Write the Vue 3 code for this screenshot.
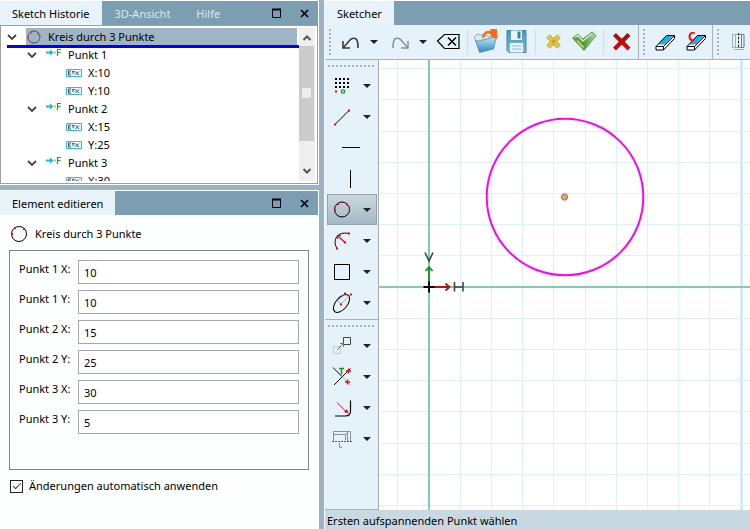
<script setup>
import { ref, computed, onMounted, onBeforeUnmount } from 'vue'

const historyTabs = ['Sketch Historie', '3D-Ansicht', 'Hilfe']
const activeTab = ref('Sketch Historie')

const tree = [
  { text: 'Kreis durch 3 Punkte', depth: 0, icon: 'treeCircle', selected: true },
  { text: 'Punkt 1', depth: 1, icon: 'treePoint' },
  { text: 'X:10', depth: 2, icon: 'treeExpr' },
  { text: 'Y:10', depth: 2, icon: 'treeExpr' },
  { text: 'Punkt 2', depth: 1, icon: 'treePoint' },
  { text: 'X:15', depth: 2, icon: 'treeExpr' },
  { text: 'Y:25', depth: 2, icon: 'treeExpr' },
  { text: 'Punkt 3', depth: 1, icon: 'treePoint' },
  { text: 'X:30', depth: 2, icon: 'treeExpr' }
]

const fields = ref([
  { id: 'p1x', label: 'Punkt 1 X:', value: '10' },
  { id: 'p1y', label: 'Punkt 1 Y:', value: '10' },
  { id: 'p2x', label: 'Punkt 2 X:', value: '15' },
  { id: 'p2y', label: 'Punkt 2 Y:', value: '25' },
  { id: 'p3x', label: 'Punkt 3 X:', value: '30' },
  { id: 'p3y', label: 'Punkt 3 Y:', value: '5' }
])
const autoApply = ref(true)

const barGroups = [
  [
    { icon: 'undo', label: 'Rückgängig', menu: true },
    { icon: 'redo', label: 'Wiederholen', menu: true },
    { icon: 'erase', label: 'Löschen' },
    { sep: true },
    { icon: 'open', label: 'Öffnen' },
    { icon: 'save', label: 'Speichern' },
    { sep: true },
    { icon: 'yellowX', label: 'Verwerfen' },
    { icon: 'check', label: 'Übernehmen' },
    { sep: true },
    { icon: 'redX', label: 'Abbrechen' }
  ],
  [
    { icon: 'rubber', label: 'Radieren' },
    { icon: 'rubberC', label: 'Bedingungen radieren' }
  ],
  [{ icon: 'sheet', label: 'Ansicht' }]
]

const toolGroups = [
  [
    { icon: 'raster', label: 'Raster', menu: true },
    { icon: 'line', label: 'Linie', menu: true },
    { icon: 'hline', label: 'Horizontale' },
    { icon: 'vline', label: 'Vertikale' },
    { icon: 'circle', label: 'Kreis', menu: true, active: true },
    { icon: 'arc', label: 'Bogen', menu: true },
    { icon: 'rect', label: 'Rechteck', menu: true },
    { icon: 'ellipse', label: 'Ellipse', menu: true }
  ],
  [
    { icon: 'move', label: 'Verschieben', menu: true },
    { icon: 'trim', label: 'Trimmen', menu: true },
    { icon: 'fillet', label: 'Verrunden', menu: true },
    { icon: 'measure', label: 'Bemaßung', menu: true }
  ]
]

const rasterDots = [6, 10, 14]
  .flatMap(y => [7, 11, 15, 19].map(x => `<rect x="${x}" y="${y}" width="2" height="2"/>`))
  .join('')

const rubberBody =
  '<path d="M5 18.500L15.500 7.500h8v3l-11 11.500H5z" fill="#fff"/>' +
  '<path d="M7 16.500L15.500 7.500h7l-8.500 9z" fill="#18b0ea"/>' +
  '<path d="M5 18.500h7.500v3.500H5zM12.500 18.500l11-11v3l-11 11.500M5 18.500L15.500 7.500h8" fill="none" stroke="#000"/>'

const icons = {
  undo: '<path d="M7 13v7h7M7.500 19.500L13.500 12.500C16 9.500 20 9.500 21.300 13C22 15 22 17 22 20" fill="none" stroke="#3a3a3a" stroke-width="1.600"/>',
  redo: '<path d="M23 13v7h-7M22.500 19.500L16.500 12.500C14 9.500 10 9.500 8.700 13C8 15 8 17 8 20" fill="none" stroke="#8a8f92" stroke-width="1.500"/>',
  erase: '<path d="M2.500 13L9.500 6.500h14.500v14h-14.500z" fill="none" stroke="#000" stroke-width="1.200"/><path d="M13 9.500l8 8M21 9.500l-8 8" stroke="#000" stroke-width="1.500"/>',
  open:
    '<path d="M2 9l3-3 4 1 3-1 8 4 2 9-13 4z" fill="#dfe9ee" stroke="#8fa9b5"/>' +
    '<path d="M6 13l18.500-4.500-3 12.500-14 3.500-4-12z" fill="url(#gFolder)" stroke="#4b8fb5" stroke-width=".8"/>' +
    '<path d="M9.500 10C11 4.500 14 2 18.500 2.800V1h6.500l.5 10-4.500-1.500-3-2 1-1C16 4.500 13 5.500 13 9z" fill="#fb6a14"/>',
  save:
    '<path d="M4 2.500h19v22H6l-2-2z" fill="url(#gDisk)" stroke="#3d86ac"/>' +
    '<path d="M8 2.500h11v9.500H8z" fill="#edf5f8"/><path d="M14.500 3.500h3v7h-3z" fill="#3c83a8"/>' +
    '<path d="M7 15h13v9.500H7z" fill="#e7f3f7"/><path d="M9 18h9M9 21h9" stroke="#8fc0d4"/>',
  yellowX:
    '<path d="M8 8l11 11M19 8L8 19" stroke="#c3a43d" stroke-width="5"/>' +
    '<path d="M8 8l11 11M19 8L8 19" stroke="#dfc83c" stroke-width="3.400"/>' +
    '<path d="M11.500 13.500h4M13.500 11.500v4" stroke="#d99b20" stroke-width="2"/>',
  check:
    '<path d="M1.500 10l5.300-4 5 5 9.400-7 4 3.500L13 22.500z" fill="url(#gCheck)" stroke="#6f9668"/>' +
    '<path d="M4 9.500l2.800-2 5 5.500 9-7" fill="none" stroke="#d9f0c4" stroke-width="1.500"/>' +
    '<path d="M6 12.500l6.500 7" stroke="#dac83a" stroke-width="2"/>',
  redX: '<path d="M6.500 6.500l14.500 14.500M21 6.500L6.500 21" stroke="url(#gRed)" stroke-width="4.200"/>',
  rubber: rubberBody,
  rubberC: rubberBody + '<text x="6" y="12.500" font-size="12" font-weight="bold" fill="#f00">C</text>',
  sheet:
    '<path d="M7.500 6.500h6v13h-6zM10.500 7v12" fill="none" stroke="#a5adb1"/>' +
    '<path d="M13.500 5v16" stroke="#222" stroke-dasharray="2 2"/>' +
    '<path d="M13.500 6.500h5.500v13h-5.500M16.500 7v12" fill="none" stroke="#737b80"/><path d="M9 21.500h10" stroke="#a5adb1"/>',
  raster: rasterDots + '<rect x="7" y="18.500" width="2" height="2" fill="#f00"/><circle cx="15" cy="19.500" r="1.700" fill="none" stroke="#129a1e" stroke-width="1.300"/>',
  line: '<path d="M7 21.500l14-14" stroke="#000"/><path d="M6 20.500h2v2H6zM20 6.500h2v2h-2z" fill="#f00"/>',
  hline: '<path d="M4 13.500h18" stroke="#000"/>',
  vline: '<path d="M12.500 5v18" stroke="#000"/>',
  circle:
    '<circle cx="14" cy="13.500" r="7.500" fill="none" stroke="#000"/>' +
    '<path d="M9 7h2v2H9zM18 7.500h2v2h-2zM6 13h2v2H6z" fill="#f00"/>',
  arc:
    '<path d="M9 21.500C4.500 14 8 4 21 6.500" fill="none" stroke="#000"/>' +
    '<path d="M17 15.500L10 9M9.500 12V8.500H13" fill="none" stroke="#f00" stroke-width="1.200"/>' +
    '<path d="M8 20.500h2v2H8zM20 5.500h2v2h-2zM16 14.500h2v2h-2z" fill="#f00"/>',
  rect: '<path d="M6.500 6.500h15v15h-15z" fill="none" stroke="#000"/>',
  ellipse:
    '<ellipse cx="13.500" cy="14.500" rx="10.500" ry="5.800" transform="rotate(-50 13.500 14.500)" fill="none" stroke="#000"/>' +
    '<path d="M13 15l9.500-9.500M13 15l-3.500-3 7.500-7.500" fill="none" stroke="#999" stroke-width=".8"/>' +
    '<path d="M16 3.500h2v2h-2zM22 4.500h2v2h-2zM12 14.500h2v2h-2z" fill="#f00"/>',
  move:
    '<path d="M15.500 5.500h7v7h-7z" fill="none" stroke="#444"/><path d="M5.500 14.500h7v7h-7z" fill="none" stroke="#c4c9cc"/>' +
    '<path d="M9 18l6-6M12 11.500h3.500V15" fill="none" stroke="#777"/>',
  trim:
    '<path d="M5 4.500l9 9M6 22L22.500 5.500" stroke="#000"/><path d="M14 13.500l9 9" stroke="#aab59a"/>' +
    '<path d="M11 5.500h5M13.500 5.500v6" stroke="#129a1e" stroke-width="1.400"/>' +
    '<path d="M18 8h5M20.500 5.500v5M17 19h5M19.500 16.500v5" stroke="#f00" stroke-width="1.300"/>',
  fillet:
    '<path d="M22.500 6.500v10.500q0 5-5 5H7" fill="none" stroke="#000" stroke-width="1.200"/>' +
    '<path d="M9 8.500l9 9" stroke="#f00"/><path d="M20.500 19.500l-4.500-1.500 3-3z" fill="#f00"/>',
  measure:
    '<path d="M5.500 16V6.500h17V16M5.500 9.500h12V15M17.500 9.500l3-3M19.500 7v9" fill="none" stroke="#8a9194"/>' +
    '<path d="M4 16.500h20" stroke="#555" stroke-dasharray="2 1"/><path d="M11.500 18v4.500H14" fill="none" stroke="#8a9194"/>'
}

const treeIcons = {
  treeCircle: '<circle cx="8" cy="9" r="6" fill="none" stroke="#3d5562"/><path d="M4 3.500h2v2H4zM11 4.500h2v2h-2zM1 9h2v2H1z" fill="#c8484e"/>',
  treePoint:
    '<path d="M0 6.500h5" stroke="#15b4ee" stroke-width="2"/><path d="M4 3.500l3.500 3-3.500 3z" fill="#15b4ee"/>' +
    '<path d="M8 5.500h2v2H8z" fill="#dcc328"/><path d="M11.500 10V3.500H15M11.500 6.500H14.500" fill="none" stroke="#2a9a2a" stroke-width="1.200"/>',
  treeExpr:
    '<path d="M.5 5.500h15v7H.5z" fill="#e2f5fd" stroke="#35b5ea"/>' +
    '<path d="M5 7H2.500v4H5M2.500 9H4.500M6 7.500h2.500M6 9h2.500M9.500 7.500l3.500 3.500M13 7.500l-3.500 3.500" fill="none" stroke="#3c4a52" stroke-width=".9"/>'
}

/* Drawing area: origin of the sketch and grid pitch */
const origin = { x: 50, y: 227 }
const pitch = 31.2
const canvas = ref(null)
const size = ref({ w: 400, h: 450 })
const steps = (start, length) => {
  const list = []
  for (let n = Math.ceil(-start / pitch); start + n * pitch < length; n++) {
    if (n !== 0) list.push({ n, at: Math.floor(start + n * pitch) + 0.5, major: n % 10 === 0 })
  }
  return list
}
const columns = computed(() => steps(origin.x, size.value.w))
const rows = computed(() => steps(origin.y, size.value.h))

function measure() {
  const box = canvas.value.getBoundingClientRect()
  size.value = { w: box.width, h: box.height }
}
onMounted(() => {
  measure()
  window.addEventListener('resize', measure)
})
onBeforeUnmount(() => window.removeEventListener('resize', measure))
</script>

<template>
  <div class="workspace">
    <svg class="defs" aria-hidden="true">
      <linearGradient id="gFolder" x1="0" y1="0" x2="0" y2="1">
        <stop offset="0" stop-color="#c5e4f2" /><stop offset="1" stop-color="#2b8cc4" />
      </linearGradient>
      <linearGradient id="gDisk" x1="0" y1="0" x2="0" y2="1">
        <stop offset="0" stop-color="#4a96bd" /><stop offset="1" stop-color="#79bcd8" />
      </linearGradient>
      <linearGradient id="gCheck" x1="0" y1="0" x2="1" y2="0">
        <stop offset="0" stop-color="#5fa84c" /><stop offset=".45" stop-color="#3f9a3c" /><stop offset="1" stop-color="#b4dca4" />
      </linearGradient>
      <linearGradient id="gRed" gradientUnits="userSpaceOnUse" x1="0" y1="5" x2="0" y2="22">
        <stop offset="0" stop-color="#8c1a10" /><stop offset="1" stop-color="#d80808" />
      </linearGradient>
    </svg>

    <div class="side">
      <section class="panel history">
        <header class="head">
          <button
            v-for="tab in historyTabs"
            :key="tab"
            class="tab"
            :class="{ active: tab === activeTab }"
            @click="activeTab = tab"
          >{{ tab }}</button>
          <span class="spacer"></span>
          <button class="win" aria-label="Maximieren"><svg width="11" height="11"><path d="M1.500 1.500h8v8h-8z" fill="none" stroke="#000" /><path d="M1 1.500h9" stroke="#000" stroke-width="2" /></svg></button>
          <button class="win" aria-label="Schließen"><svg width="11" height="11"><path d="M2 2l7 7M9 2L2 9" stroke="#000" stroke-width="1.700" /></svg></button>
        </header>
        <div class="tree-box">
          <ul class="tree">
            <li v-for="(node, i) in tree" :key="i" class="node" :class="['depth-' + node.depth, { selected: node.selected }]">
              <svg class="chevron" viewBox="0 0 14 18"><path v-if="node.depth < 2" d="M3 7l4 4 4-4" fill="none" stroke="#444" stroke-width="1.800" /></svg>
              <span class="entry">
                <svg class="node-icon" viewBox="0 0 16 18" v-html="treeIcons[node.icon]"></svg>
                <span>{{ node.text }}</span>
              </span>
            </li>
          </ul>
          <div class="scroll">
            <svg viewBox="0 0 15 18" class="scroll-arrow"><path d="M4 12l3.500-3.500L11 12" fill="none" stroke="#555" stroke-width="2" /></svg>
            <span class="thumb"><span class="thumb-grip"></span></span>
            <span class="spacer"></span>
            <svg viewBox="0 0 15 18" class="scroll-arrow"><path d="M4 6l3.500 3.500L11 6" fill="none" stroke="#555" stroke-width="2" /></svg>
          </div>
        </div>
      </section>

      <section class="panel editor">
        <header class="head">
          <button class="tab active">Element editieren</button>
          <span class="spacer"></span>
          <button class="win" aria-label="Maximieren"><svg width="11" height="11"><path d="M1.500 1.500h8v8h-8z" fill="none" stroke="#000" /><path d="M1 1.500h9" stroke="#000" stroke-width="2" /></svg></button>
          <button class="win" aria-label="Schließen"><svg width="11" height="11"><path d="M2 2l7 7M9 2L2 9" stroke="#000" stroke-width="1.700" /></svg></button>
        </header>
        <div class="editor-body">
          <div class="element">
            <svg width="20" height="20"><circle cx="10" cy="10" r="7.500" fill="none" stroke="#000" /><path d="M5 3h2v2H5zM14 4h2v2h-2zM2 9h2v2H2z" fill="#f00" /></svg>
            <span>Kreis durch 3 Punkte</span>
          </div>
          <form class="fields" @submit.prevent>
            <div v-for="field in fields" :key="field.id" class="field">
              <label :for="field.id">{{ field.label }}</label>
              <input :id="field.id" v-model="field.value" type="text" />
            </div>
          </form>
          <label class="auto">
            <input v-model="autoApply" type="checkbox" />
            <span>Änderungen automatisch anwenden</span>
          </label>
        </div>
      </section>
    </div>

    <section class="panel sketcher">
      <header class="head">
        <button class="tab active">Sketcher</button>
      </header>
      <div class="bar">
        <div v-for="(group, g) in barGroups" :key="g" class="bar-group">
          <span class="grip-v"></span>
          <template v-for="(item, i) in group" :key="i">
            <span v-if="item.sep" class="sep"></span>
            <template v-else>
              <button class="tool" :class="{ narrow: item.menu }" :aria-label="item.label">
                <svg class="icon" viewBox="0 0 28 28" v-html="icons[item.icon]"></svg>
              </button>
              <button v-if="item.menu" class="drop" :aria-label="item.label + ' Auswahl'">
                <svg width="8" height="4"><path d="M0 0h8L4 4z" fill="#222" /></svg>
              </button>
            </template>
          </template>
        </div>
      </div>
      <div class="work">
        <div class="tools">
          <div v-for="(group, g) in toolGroups" :key="g" class="tool-group">
            <span class="grip-h"></span>
            <div v-for="item in group" :key="item.icon" class="split" :class="{ active: item.active }">
              <button class="tool" :class="{ wide: !item.menu }" :aria-label="item.label">
                <svg class="icon" viewBox="0 0 28 28" v-html="icons[item.icon]"></svg>
              </button>
              <button v-if="item.menu" class="drop" :aria-label="item.label + ' Auswahl'">
                <svg width="8" height="4"><path d="M0 0h8L4 4z" fill="#222" /></svg>
              </button>
            </div>
          </div>
        </div>
        <div ref="canvas" class="canvas">
          <svg width="100%" height="100%">
            <line v-for="c in columns" :key="'c' + c.n" :x1="c.at" :x2="c.at" y1="0" y2="100%" :class="c.major ? 'major' : 'minor'" />
            <line v-for="r in rows" :key="'r' + r.n" x1="0" x2="100%" :y1="r.at" :y2="r.at" :class="r.major ? 'major' : 'minor'" />
            <path class="axis" d="M50 0V2000M0 227H4000" />
            <path d="M50 222V207M46.500 211l3.500-4 3.500 4" fill="none" stroke="#12961a" stroke-width="1.800" />
            <path d="M55 227H70M66.500 223.500l4 3.500-4 3.500" fill="none" stroke="#b81010" stroke-width="1.800" />
            <path d="M44.500 227h11M50 221.500v11" stroke="#000" stroke-width="2" />
            <path d="M46 192.500l4 8.500 4-8.500M75.500 222v9.500M84 222v9.500M75.500 227H84" fill="none" stroke="#444" stroke-width="1.600" />
            <circle cx="186" cy="137" r="78.300" fill="none" stroke="#f0f" stroke-width="2" />
            <circle cx="185.500" cy="137" r="3.200" fill="#c5b83e" stroke="#f040c8" />
          </svg>
        </div>
      </div>
      <footer class="status">Ersten aufspannenden Punkt wählen</footer>
    </section>
  </div>
</template>

<style>
body {
  margin: 0;
  overflow: hidden;
}
</style>

<style scoped>
.workspace {
  display: grid;
  grid-template-columns: minmax(0, 319fr) minmax(0, 426fr);
  grid-template-rows: minmax(0, 1fr);
  column-gap: 5px;
  height: 100vh;
  background: #9ab4c6;
  color: #000;
  font-family: "Noto Sans", "Open Sans", sans-serif;
  font-size: 11px;
  line-height: 18px;
}
.defs {
  position: absolute;
  width: 0;
  height: 0;
}
button {
  display: flex;
  align-items: center;
  justify-content: center;
  margin: 0;
  padding: 0;
  border: 0;
  background: none;
  color: inherit;
  font: inherit;
}
.spacer {
  flex: 1;
}
.side {
  display: grid;
  grid-template-rows: minmax(0, 185fr) minmax(0, 339fr);
  row-gap: 5px;
}
.panel {
  display: flex;
  flex-direction: column;
  min-width: 0;
  min-height: 0;
  background: #fdfefe;
  border-top: 1px solid #fff;
}
.side .panel {
  padding-right: 1px;
}
.head {
  display: flex;
  flex: none;
  height: 24px;
  background: #7c9eb3;
}
.tab {
  padding: 2px 13px 0;
  color: #dbe8ef;
}
.tab.active {
  padding: 2px 12px 0;
  background: #e7f3f9;
  color: #000;
}
.win {
  width: 28px;
}

.tree-box {
  display: flex;
  flex: 1;
  min-height: 0;
  margin-bottom: 1px;
  padding: 2px 2px 2px 4px;
  border: 1px solid #9c9f9f;
  background: #fff;
}
.tree {
  flex: 1;
  margin: 0;
  padding: 0;
  overflow: hidden;
  list-style: none;
}
.node {
  display: flex;
  gap: 7px;
  height: 18px;
}
.depth-1 {
  padding-left: 20px;
}
.depth-2 {
  padding-left: 40px;
}
.chevron {
  flex: none;
  width: 14px;
  height: 18px;
}
.entry {
  display: flex;
  flex: 1;
  gap: 6px;
  margin-right: 2px;
}
.node-icon {
  flex: none;
  width: 16px;
  height: 18px;
}
.selected {
  position: relative;
}
.selected .entry {
  background: #9fb5c6;
}
.selected::after {
  content: "";
  position: absolute;
  right: 0;
  bottom: -2px;
  left: 2px;
  height: 3px;
  background: #00f;
}
.scroll {
  display: flex;
  flex-direction: column;
  width: 16px;
  background: #efefef;
}
.scroll-arrow {
  flex: none;
  height: 18px;
}
.thumb {
  display: grid;
  place-items: center;
  height: 62%;
  margin-right: 1px;
  background: #cbcbcb;
}
.thumb-grip {
  width: 9px;
  height: 10px;
  background: #ececec;
}

.editor-body {
  display: flex;
  flex-direction: column;
  padding: 9px;
}
.element {
  display: flex;
  align-items: center;
  gap: 6px;
  height: 20px;
  margin-bottom: 6px;
}
.fields {
  display: flex;
  flex-direction: column;
  gap: 6px;
  padding: 9px 9px 35px;
  border: 1px solid #7f8388;
}
.field {
  display: flex;
  gap: 6px;
}
.field label {
  width: 53px;
  white-space: nowrap;
}
.field input {
  flex: 1;
  min-width: 0;
  height: 24px;
  box-sizing: border-box;
  padding: 0 5px;
  border: 1px solid #a5a7a8;
  border-radius: 0;
  background: #fff;
  color: #000;
  font: inherit;
  outline: none;
}
.auto {
  display: flex;
  align-items: center;
  gap: 6px;
  height: 18px;
  margin-top: 7px;
  padding-left: 1px;
}
.auto input {
  appearance: none;
  display: grid;
  place-items: center;
  width: 13px;
  height: 13px;
  margin: 0;
  border: 1px solid #222;
  background: #fff;
  box-sizing: border-box;
}
.auto input:checked::before {
  content: "";
  width: 7px;
  height: 3px;
  margin-bottom: 2px;
  border: solid #333;
  border-width: 0 0 1px 1px;
  transform: rotate(-45deg);
}

.sketcher {
  border-left: 1px solid #f4f8fa;
}
.bar {
  display: flex;
  flex: none;
  height: 34px;
  border-bottom: 1px solid #a9b2b7;
  background: #e6f2f9;
  overflow: hidden;
}
.bar-group {
  display: flex;
  flex: none;
  align-items: center;
  padding: 0 1px 0 4px;
  border-right: 1px solid #a9b2b7;
}
.grip-v {
  width: 2px;
  height: 26px;
  margin-right: 4px;
  background: repeating-linear-gradient(#a9b4bb 0 2px, transparent 2px 4px);
}
.sep {
  width: 1px;
  height: 24px;
  margin: 0 2px 0 3px;
  background: #d3d9dc;
}
.tool {
  flex: none;
  width: 31px;
}
.tool.narrow {
  width: 29px;
}
.icon {
  flex: none;
  width: 28px;
  height: 28px;
}
.drop {
  flex: none;
  width: 20px;
}
.work {
  display: flex;
  flex: 1;
  min-height: 0;
}
.tools {
  flex: none;
  border-right: 1px solid #a3adb3;
  border-bottom: 1px solid #a9b2b7;
  background: #e6f2f9;
}
.tool-group {
  padding: 5px 1px 1px 2px;
}
.tool-group + .tool-group {
  border-top: 1px solid #a9b2b7;
}
.grip-h {
  display: block;
  height: 2px;
  margin: 0 3px 3px 1px;
  background: repeating-linear-gradient(90deg, #a9b4bb 0 2px, transparent 2px 4px);
}
.split {
  display: flex;
  height: 31px;
  box-sizing: border-box;
}
.split .tool {
  width: 30px;
}
.split .tool.wide {
  width: 50px;
}
.split.active {
  background: linear-gradient(#cbd8df, #a2b8c5);
  outline: 1px solid #98a2a8;
  outline-offset: -1px;
}
.canvas {
  flex: 1;
  min-width: 0;
  overflow: hidden;
  background: #fff;
}
.canvas svg {
  display: block;
}
.minor {
  stroke: #dcf2fa;
}
.major {
  stroke: #b9e6f6;
  stroke-width: 2;
}
.axis {
  stroke: #80ceb2;
  stroke-width: 2;
}
.status {
  flex: none;
  height: 19px;
  padding-left: 2px;
  line-height: 21px;
  background: #c9d9e2;
  overflow: hidden;
}
</style>
